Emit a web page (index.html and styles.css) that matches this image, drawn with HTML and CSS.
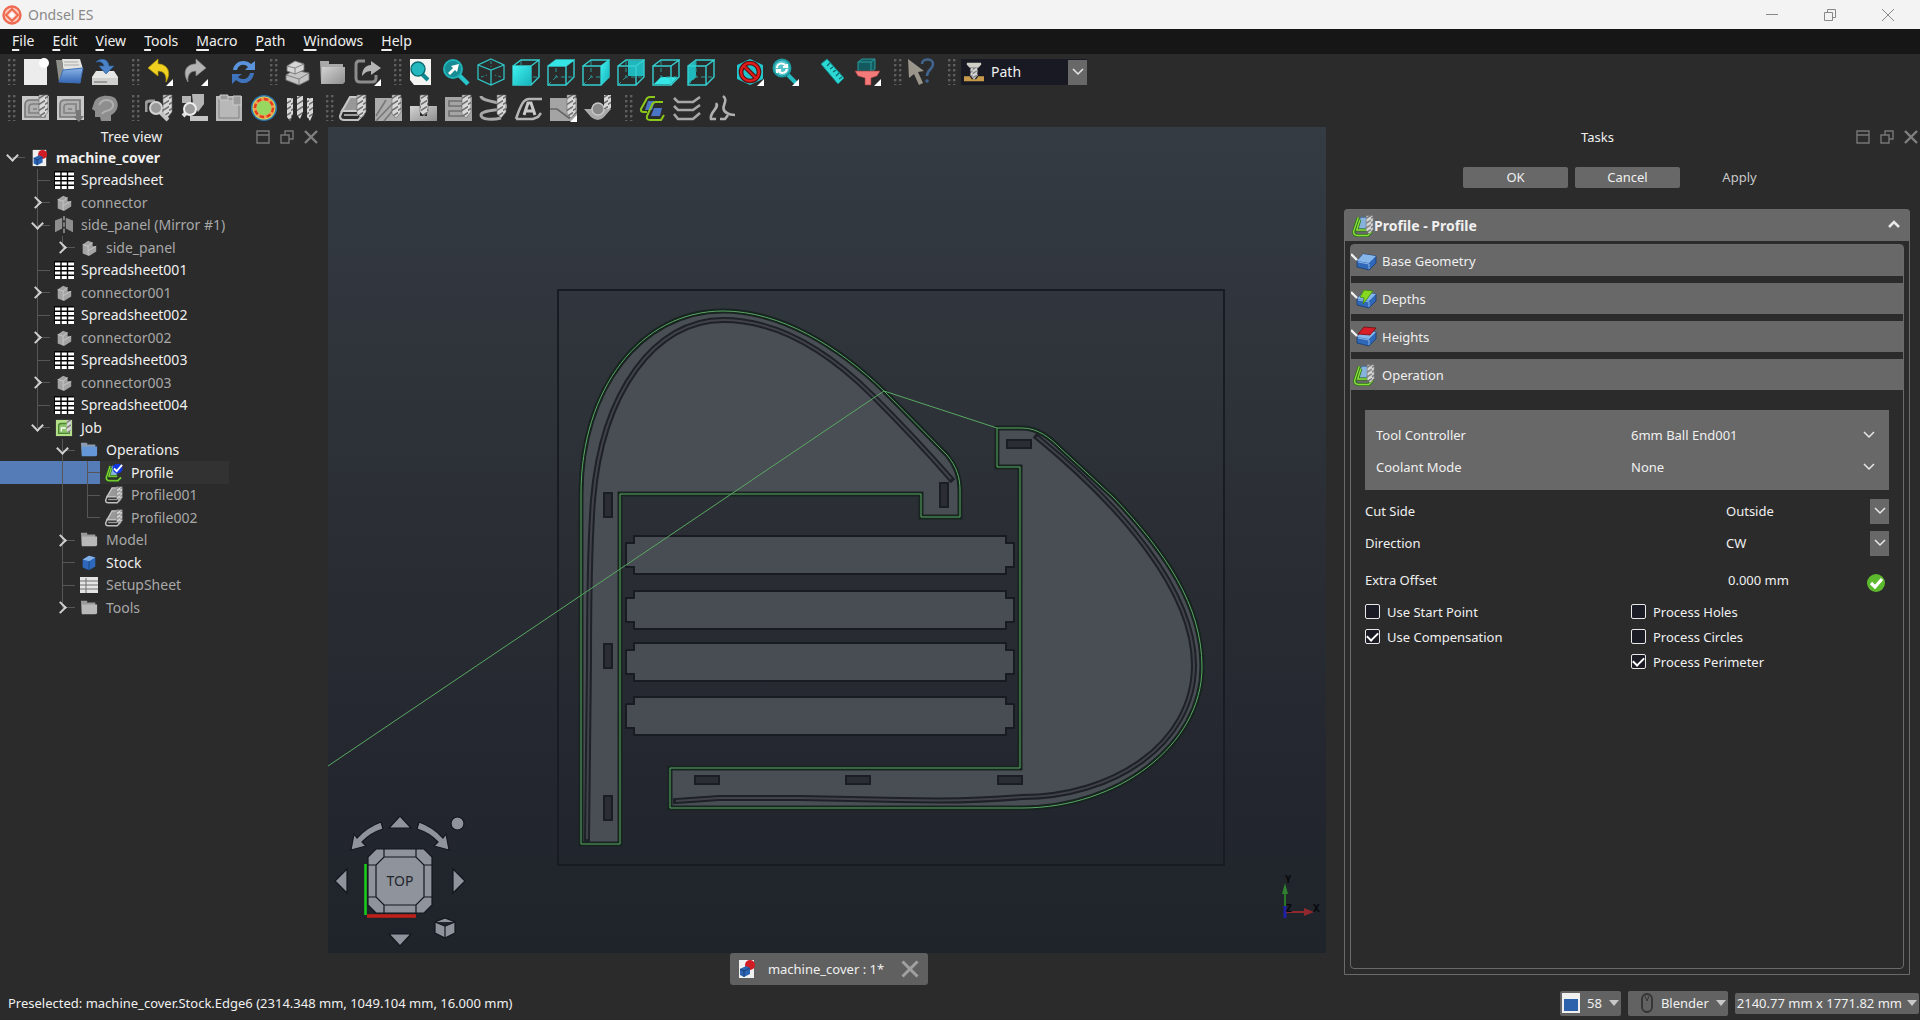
FILE: index.html
```html
<!DOCTYPE html>
<html lang="en">
<head>
<meta charset="utf-8">
<title>Ondsel ES</title>
<link rel="stylesheet" href="styles.css">
</head>
<body>
<svg class="defs" width="0" height="0" aria-hidden="true">
<defs>
<linearGradient id="gGrey" x1="0" y1="0" x2="1" y2="1"><stop offset="0" stop-color="#d4d4d4"/><stop offset="1" stop-color="#8e8e8e"/></linearGradient>
<linearGradient id="gTeal" x1="0" y1="0" x2="1" y2="1"><stop offset="0" stop-color="#3ff0f0"/><stop offset="1" stop-color="#16b4bc"/></linearGradient>
<linearGradient id="gBlue" x1="0" y1="0" x2="0" y2="1"><stop offset="0" stop-color="#8ab4e8"/><stop offset="1" stop-color="#3465b4"/></linearGradient>
<pattern id="pDrill" width="6" height="6" patternUnits="userSpaceOnUse"><rect width="6" height="6" fill="#d8d8d8"/><path d="M-1 5L7 0" stroke="#6d6d6d" stroke-width="1.6"/></pattern>
<path id="pa" d="M581 844V494C581 390 640 311 723 311C780 311 838 346 884 391L947 455C957 467 960 478 960 490V517H921V494H620V844Z"/>
<path id="pb" d="M997 428H1022C1038 428 1050 438 1060 448L1114 498C1165 552 1202 605 1202 667C1202 745 1118 808 1022 808H670V768H1020V467H997Z"/>
<path id="ga" d="M587 839L589 663C589 600 590 540 593 500C602 392 655 320 723 320C778 320 829 352 873 396C905 428 930 455 951 479"/>
<path id="gb" d="M1037 437C1120 505 1194 590 1194 665C1194 745 1112 797 1022 797C980 801 940 801 900 800L800 798H719L676 801"/>
<symbol id="drill" viewBox="0 0 28 28"><path d="M18 1H27V18L22 24L18 20Z" fill="url(#pDrill)" stroke="#6a6a6a" stroke-width=".6"/></symbol>
<symbol id="tri" viewBox="0 0 28 28"><path d="M28 21V28H21Z" fill="#fff"/></symbol>
<symbol id="new" viewBox="0 0 28 28"><path d="M3 1H22L26 5V27H3Z" fill="#ececec"/><circle cx="23" cy="5" r="5" fill="#fff"/></symbol>
<symbol id="open" viewBox="0 0 28 28"><path d="M0 2H6L9 24H3Z" fill="#8f8f8a"/><path d="M6 1H24L27 11L8 16Z" fill="#e4e4e2"/><path d="M8 4H22M8 7H23" stroke="#aaa" stroke-width="1"/><path d="M7 12L27 10L24 25L3 24Z" fill="url(#gBlue)" stroke="#3f6fb5"/></symbol>
<symbol id="save" viewBox="0 0 28 28"><path d="M5 13H23L27 19V27H1V19Z" fill="#e6e6e4"/><path d="M1 20H27V27H1Z" fill="#cfcfcd"/><path d="M3 24H16" stroke="#888" stroke-width="1.5"/><path d="M5 4C9 0 17 0 18 8H23L15 16L8 8H13C12 4 9 3 5 4Z" fill="#4b82c8" stroke="#2f5f9c" stroke-width=".7"/></symbol>
<symbol id="undo" viewBox="0 0 28 28"><path d="M3 10L13 1V6C22 6 27 14 21 24C22 16 18 13 13 13V18Z" fill="#f0d020" stroke="#b89c08" stroke-width=".7"/></symbol>
<symbol id="redo" viewBox="0 0 28 28"><path d="M26 10L16 1V6C6 6 2 14 8 24C7 16 11 13 16 13V18Z" fill="#b4b4b4" stroke="#888" stroke-width=".7"/></symbol>
<symbol id="refresh" viewBox="0 0 28 28"><path d="M4 12C5 3 16 0 22 6L26 3V12H16L19 9C15 5 9 7 8 12Z" fill="#5b94dc"/><path d="M25 15C24 25 13 28 7 22L3 26V16H13L9 19C13 23 20 21 21 15Z" fill="#3f74bd"/></symbol>
<symbol id="bricks" viewBox="0 0 28 28"><g stroke="#777" stroke-width=".9"><path d="M3 17L11 12L26 15V22L16 27L3 22Z" fill="#c4c4c4"/><path d="M3 17L16 21L26 15M16 21V27" fill="none"/><path d="M4 8L12 3L21 6V12L12 16L4 13Z" fill="#d6d6d6"/><path d="M4 8L12 10L21 6M12 10V16" fill="none"/></g></symbol>
<symbol id="folder" viewBox="0 0 28 28"><path d="M2 3H11V6H25V25H3Z" fill="#a9a9a9"/><path d="M4 9H27V24L25 26H3Z" fill="url(#gGrey)"/></symbol>
<symbol id="export" viewBox="0 0 28 28"><path d="M12 3H6Q3 3 3 7V20Q3 24 7 24H19Q23 24 23 20V17" fill="none" stroke="#8c8c8c" stroke-width="3"/><path d="M18 3L28 10L18 17V13C13 13 11 16 9 18C9 12 12 7 18 7Z" fill="#b4b4b4"/></symbol>
<symbol id="fit" viewBox="0 0 28 28"><path d="M3 1H24V27H7L3 22Z" fill="#f4f4f2"/><path d="M14 15L21 22" stroke="#0e8a90" stroke-width="4"/><circle cx="11" cy="11" r="7" fill="#22b8be" stroke="#0c6c72" stroke-width="1.4"/></symbol>
<symbol id="fitsel" viewBox="0 0 28 28"><path d="M16 16L26 26" stroke="#26c6cc" stroke-width="4.5"/><circle cx="11" cy="11" r="9" fill="#178c94" stroke="#1fb4ba" stroke-width="2"/><path d="M6 15L11 10L9 8L17 6L15 14L13 12L8 17Z" fill="#fff"/></symbol>
<symbol id="iso" viewBox="0 0 28 28"><path d="M14 1L27 7V21L14 27L1 21V7ZM1 7L14 12L27 7M14 12V27" fill="none" stroke="#2fc4c6" stroke-width="1.3"/><path d="M14 3V9M4 19L10 17M24 19L18 17" stroke="#2b9092" stroke-width="1" stroke-dasharray="3 2"/></symbol>
<symbol id="wire" viewBox="0 0 28 28"><path d="M1 8H19V27H1ZM1 8L9 2H27L19 8M27 2V19L19 27" fill="none" stroke="#35cfd0" stroke-width="1.4"/><path d="M9 3V19H26M9 19L2 26" fill="none" stroke="#2b9899" stroke-width="1" stroke-dasharray="4 3"/></symbol>
<symbol id="noclip" viewBox="0 0 28 28"><path d="M14 1L27 7V21L14 27L1 21V7Z" fill="#22c4cc"/><circle cx="14" cy="14" r="9" fill="none" stroke="#5c0c0c" stroke-width="4.6"/><path d="M8 8L20 20" stroke="#5c0c0c" stroke-width="4.4"/><circle cx="14" cy="14" r="9" fill="none" stroke="#e01c1c" stroke-width="2.4"/><path d="M8 8L20 20" stroke="#e01c1c" stroke-width="2.2"/></symbol>
<symbol id="zoomr" viewBox="0 0 28 28"><path d="M17 17L26 26" stroke="#22bcc2" stroke-width="4"/><circle cx="11" cy="10" r="8.5" fill="#54c4c8" stroke="#1a9ca2" stroke-width="2"/><path d="M6 10C6 5 12 4 15 8M16 6V9H12M16 11C15 16 9 16 7 12M6 15V12H10" fill="none" stroke="#fff" stroke-width="2"/></symbol>
<symbol id="ruler" viewBox="0 0 28 28"><path d="M3 6L9 1L26 20L20 26Z" fill="#2cd8d4" stroke="#128a8a"/><path d="M12 5L9 8M15 9L12 11M18 12L15 14M21 15L18 18M24 19L21 21" stroke="#0c6466" stroke-width="1.2"/></symbol>
<symbol id="funnel" viewBox="0 0 28 28"><path d="M5 4L9 1H22V11L18 14H5ZM5 4H18V14M18 4L22 1" fill="#125a5e" stroke="#2a9a9c" stroke-width="1"/><path d="M2 13H27L24 18L18 20V27H12V20L5 18Z" fill="#f47a7a" stroke="#a03c3c" stroke-width=".6"/></symbol>
<symbol id="whats" viewBox="0 0 28 28"><path d="M1 1L17 13L11 14L16 25L12 27L7 16L2 20Z" fill="#9b968c"/><path d="M15 6C15 0 26 0 26 6C26 12 20 11 20 18" fill="none" stroke="#42638c" stroke-width="2.6"/><circle cx="20" cy="23" r="1.8" fill="#42638c"/></symbol>
<symbol id="path" viewBox="0 0 28 28"><path d="M0 20H8L11 24H17L20 20H28V27H0Z" fill="#c69a4a"/><path d="M4 1H24V4L20 8H8L4 4Z" fill="#cfcfc8"/><path d="M9 8H19V19L14 25L9 19Z" fill="url(#pDrill)"/></symbol>
<symbol id="job" viewBox="0 0 28 28"><path d="M1 2H28V26H1Z" fill="#c8c8c8"/><path d="M4 23V11Q4 6 9 6H24V23Z" fill="#b0b0b0" stroke="#777" stroke-width="1.6"/><path d="M8 19V13Q8 10 12 10H20V19ZM12 15H16" fill="none" stroke="#808080" stroke-width="1.6"/></symbol>
<symbol id="head" viewBox="0 0 28 28"><path d="M3 9C5 1 18 0 24 4C30 11 25 19 20 21V27H10L9 23H4V17L1 15Z" fill="#8e8e8e"/><path d="M8 11C13 3 23 6 22 12C20 19 13 15 11 20" fill="none" stroke="#b0b0b0" stroke-width="2"/></symbol>
<symbol id="inspect" viewBox="0 0 28 28"><path d="M1 18V10Q1 7 5 7H10" fill="none" stroke="#999" stroke-width="3"/><path d="M15 18L23 26" stroke="#c4c4c4" stroke-width="4"/><circle cx="11" cy="14" r="6" fill="#9a9a9a" stroke="#d4d4d4" stroke-width="2"/></symbol>
<symbol id="sim" viewBox="0 0 28 28"><path d="M2 2H11V9H2ZM12 0H24V10L18 18L13 10Z" fill="#b4b4b4"/><path d="M10 22H28V27H10Z" fill="#c4c4c4"/><path d="M3 22L8 17" stroke="#ddd" stroke-width="4"/><circle cx="10" cy="15" r="6" fill="#9c9c9c" stroke="#eee" stroke-width="2"/></symbol>
<symbol id="panel" viewBox="0 0 28 28"><path d="M1 2H27V27H1Z" fill="#b8b8b8"/><path d="M4 5H24V24H4Z" fill="none" stroke="#808080"/><path d="M5 1H13V6H5ZM18 2H26V11H18Z" fill="#9c9c9c" stroke="#ccc"/></symbol>
<symbol id="bit" viewBox="0 0 28 28"><circle cx="14" cy="14" r="13" fill="#2c78b4"/><circle cx="14" cy="14" r="11.5" fill="#c8dc60"/><circle cx="14" cy="14" r="8" fill="#98d860"/><circle cx="14" cy="14" r="9" fill="none" stroke="#f0a050" stroke-width="3.4"/><circle cx="14" cy="14" r="9" fill="none" stroke="#e03c20" stroke-width="2.4" stroke-dasharray="4.4 2.6"/></symbol>
<symbol id="bits" viewBox="0 0 28 28"><path d="M2 4H8V20L5 27L2 23ZM12 2H18V18L15 25L12 21ZM22 4H28V20L25 27L22 23Z" fill="url(#pDrill)"/></symbol>
<symbol id="profile" viewBox="0 0 28 28"><path d="M11 3H21L19 17H3Z" fill="#989898" stroke="#c8c8c8" stroke-width="2"/><path d="M4 15L1 22Q1 26 5 26H19L25 20" fill="none" stroke="#c0c0c0" stroke-width="2.2"/><path d="M5 21H19" stroke="#a0a0a0" stroke-width="2"/></symbol>
<symbol id="profilec" viewBox="0 0 28 28"><path d="M11 3H20L18 18H5Z" fill="#86b2dc" stroke="#3c6ca0" stroke-width="1"/><path d="M8 3L2 21Q2 26 7 26H20L25 21M10 6L6 19H19" fill="none" stroke="#2c7018" stroke-width="3.8"/><path d="M8 3L2 21Q2 26 7 26H20L25 21M10 6L6 19H19" fill="none" stroke="#8ade3c" stroke-width="1.8"/></symbol>
<symbol id="pocket" viewBox="0 0 28 28"><path d="M1 4H28V27H1Z" fill="#acacac"/><path d="M2 22L12 6M2 27L20 8M10 27L25 9" stroke="#777" stroke-width="1.6"/></symbol>
<symbol id="drilling" viewBox="0 0 28 28"><path d="M1 12H11V22H18V12H28V27H1Z" fill="url(#gGrey)"/><path d="M11 1H19V18L15 22L11 18Z" fill="url(#pDrill)" stroke="#666" stroke-width=".6"/></symbol>
<symbol id="face" viewBox="0 0 28 28"><path d="M1 3H28V27H1Z" fill="#a4a4a4"/><path d="M20 7H5V12H22M22 17H5V22H24" fill="none" stroke="#707070" stroke-width="1.6"/></symbol>
<symbol id="helix" viewBox="0 0 28 28"><path d="M2 2C2 8 26 8 27 12C28 17 2 15 2 21C2 26 14 26 22 24" fill="none" stroke="#a8a8a8" stroke-width="3"/></symbol>
<symbol id="engrave" viewBox="0 0 28 28"><path d="M28 5H15C10 5 7 10 2 25M2 25H19L24 23L27 19" fill="none" stroke="#b4b4b4" stroke-width="2.6"/><path d="M10 21L14 9H17L21 21M12 17H20" fill="none" stroke="#c8c8c8" stroke-width="3"/></symbol>
<symbol id="deburr" viewBox="0 0 28 28"><path d="M1 4H28V27H1Z" fill="#a4a4a4"/><path d="M1 15H8L20 24L28 18" fill="none" stroke="#666" stroke-width="1.6"/></symbol>
<symbol id="surf" viewBox="0 0 28 28"><path d="M0 15H7Q8 11 14 11Q20 11 21 15H27L20 23Q14 29 7 23Z" fill="#aaa"/><circle cx="14" cy="15" r="6" fill="#888" stroke="#c8c8c8" stroke-width="1.4"/><path d="M20 1H27V15H20Z" fill="url(#pDrill)"/></symbol>
<symbol id="dress" viewBox="0 0 28 28"><path d="M10 7H17L14 16H7ZM16 14H24L22 22H13Z" fill="#4a74c4"/><path d="M17 3H12Q9 3 8 6L3 15Q2 18 6 18H9M25 8H18Q15 8 14 11L9 22Q8 26 12 26H23L26 21" fill="none" stroke="#8cc81c" stroke-width="2"/></symbol>
<symbol id="layers" viewBox="0 0 28 28"><path d="M1 4L5 8H20L27 3M1 12L5 16H20L27 11M1 20L5 25H20L27 19" fill="none" stroke="#a8a8a8" stroke-width="2.6"/></symbol>
<symbol id="ramp" viewBox="0 0 28 28"><path d="M15 2C22 7 10 14 19 19Q22 21 27 21M8 9C12 14 1 18 3 25H8M12 25H17L20 21" fill="none" stroke="#b0b0b0" stroke-width="2.6"/></symbol>
<symbol id="sheet" viewBox="0 0 20 18"><path d="M0 0H20V18H0Z" fill="#050505"/><path d="M1 3H20M1 7.500H20M1 12H20M1 16.500H20" stroke="#fff" stroke-width="2.8"/><path d="M7 0V18M13.500 0V18" stroke="#050505" stroke-width="1.400"/></symbol>
<symbol id="sheet2" viewBox="0 0 20 18"><path d="M1 1H19V17H1Z" fill="#e4e4e4"/><path d="M1 5H19M1 9H19M1 13H19M7 2V17" stroke="#707070" stroke-width="1"/></symbol>
<symbol id="body" viewBox="0 0 20 20"><path d="M3 6L9 2L14 4V8L18 8V14L10 19L3 16Z" fill="#a4a4a4"/><path d="M3 6L9 8V18M9 8L14 4M9 13L18 8" stroke="#c8c8c8" fill="none"/></symbol>
<symbol id="mirror" viewBox="0 0 20 20"><path d="M0 5L8 2V14L0 18ZM20 5L12 2V14L20 18Z" fill="#8e8e8e"/><path d="M10 0V19" stroke="#b0b0b0" stroke-width="1.4" stroke-dasharray="5 2"/></symbol>
<symbol id="doc" viewBox="0 0 20 20"><path d="M3 1H18V19H3Z" fill="#f0f0f0"/><circle cx="14" cy="6" r="5" fill="#d01c24"/><path d="M4 10L10 7L14 9V15L8 18L4 16Z" fill="#2c64b4"/><path d="M4 10L8 12L14 9M8 12V18" stroke="#183c70" fill="none"/></symbol>
<symbol id="jobc" viewBox="0 0 20 20"><path d="M1 1H19V19H1Z" fill="#b4e08c"/><path d="M4 16V8Q4 5 7 5H16V16Z" fill="#8cc46c" stroke="#4c8430" stroke-width="1.400"/><path d="M7 14V10H12" fill="none" stroke="#fff" stroke-width="1.400"/><path d="M13 1H18V12L15 16L13 13Z" fill="url(#pDrill)"/></symbol>
<symbol id="folderb" viewBox="0 0 20 20"><path d="M1 2H8V4H17V16H2Z" fill="#8c9cb0"/><path d="M2 6H19V16L17 17H2Z" fill="#6496d8"/></symbol>
<symbol id="foldert" viewBox="0 0 20 20"><path d="M1 2H8V4H17V16H2Z" fill="#9a9a9a"/><path d="M2 6H19V16L17 17H2Z" fill="#b8b8b8"/></symbol>
<symbol id="box" viewBox="0 0 20 20"><path d="M3 6L10 2L17 4V14L10 18L3 15Z" fill="#2d68bc"/><path d="M3 6L10 2L17 4L10 8Z" fill="#84b0e8"/><path d="M10 8V18" stroke="#1a437c"/></symbol>
<symbol id="base" viewBox="0 0 26 22"><path d="M6 11L12 4L25 6V13L18 20L6 17Z" fill="#2f68b8" stroke="#163c70" stroke-width=".8"/><path d="M6 11L12 4L25 6L18 13Z" fill="#86b6ea"/><path d="M7 12L18 14V19" fill="none" stroke="#8ab4e4" stroke-width="1"/><path d="M0 4L4 8L6 10" stroke="#f0f0f0" stroke-width="2.400" fill="none"/></symbol>
<symbol id="depths" viewBox="0 0 26 22"><use href="#base"/><path d="M13 2L22 3L16 11L12 16L13 10L9 9Z" fill="#86d820" stroke="#3c8410" stroke-width=".8"/></symbol>
<symbol id="heights" viewBox="0 0 26 22"><use href="#base"/><path d="M7 8L13 1L25 2L19 9Z" fill="#d81c28" stroke="#6c0c10" stroke-width=".8"/></symbol>
<symbol id="chev" viewBox="0 0 14 14"><path d="M2 4L7 9L12 4" fill="none" stroke="#e8e8e8" stroke-width="1.5"/></symbol>
<symbol id="dock" viewBox="0 0 16 16"><path d="M2 2H14V14H2ZM2 6H14" fill="none" stroke="#777" stroke-width="1.4"/></symbol>
<symbol id="float" viewBox="0 0 16 16"><path d="M6 6V2H14V10H10M2 6H10V14H2Z" fill="none" stroke="#777" stroke-width="1.4"/></symbol>
<symbol id="x" viewBox="0 0 16 16"><path d="M2 2L14 14M14 2L2 14" fill="none" stroke="currentColor" stroke-width="2.4"/></symbol>
</defs>
</svg>

<header class="titlebar">
  <svg class="logo" width="20" height="20" viewBox="0 0 20 20"><circle cx="10" cy="10" r="8.500" fill="#fbd0c4" stroke="#ee6a50" stroke-width="2.400"/><path d="M10 4L16 10L10 16L4 10Z" fill="none" stroke="#ee6a50" stroke-width="2"/><circle cx="10" cy="10" r="2.500" fill="#fff"/></svg>
  <span>Ondsel ES</span>
  <div class="winbtns">
    <button aria-label="Minimize"><svg width="12" height="12" viewBox="0 0 12 12"><path d="M0 5.500H12" stroke="#888"/></svg></button>
    <button aria-label="Restore"><svg width="12" height="12" viewBox="0 0 12 12"><path d="M.5 3.500H8.500V11.500H.5ZM3.500 3V.5H11.500V8.500H9" fill="none" stroke="#888"/></svg></button>
    <button aria-label="Close"><svg width="12" height="12" viewBox="0 0 12 12"><path d="M0 0L12 12M12 0L0 12" stroke="#888"/></svg></button>
  </div>
</header>

<nav class="menubar">
  <button><u>F</u>ile</button><button><u>E</u>dit</button><button><u>V</u>iew</button><button><u>T</u>ools</button><button><u>M</u>acro</button><button><u>P</u>ath</button><button><u>W</u>indows</button><button><u>H</u>elp</button>
</nav>

<section class="toolbars">
  <div class="toolbar">
    <i class="handle"></i>
    <div class="group">
      <button aria-label="New"><svg><use href="#new"/></svg></button>
      <button aria-label="Open"><svg><use href="#open"/></svg></button>
      <button aria-label="Save"><svg><use href="#save"/></svg></button>
    </div>
    <i class="handle"></i>
    <div class="group">
      <button aria-label="Undo"><svg><use href="#undo"/><use href="#tri"/></svg></button>
      <button aria-label="Redo"><svg><use href="#redo"/><use href="#tri"/></svg></button>
      <i class="sep"></i>
      <button aria-label="Refresh"><svg><use href="#refresh"/></svg></button>
    </div>
    <i class="handle"></i>
    <div class="group">
      <button aria-label="Create part"><svg><use href="#bricks"/></svg></button>
      <button aria-label="Create group"><svg><use href="#folder"/></svg></button>
      <button aria-label="Create link"><svg><use href="#export"/><use href="#tri"/></svg></button>
    </div>
    <i class="handle"></i>
    <div class="group">
      <button aria-label="Fit all"><svg><use href="#fit"/></svg></button>
      <button aria-label="Fit selection"><svg><use href="#fitsel"/></svg></button>
      <button aria-label="Isometric"><svg><use href="#iso"/></svg></button>
      <button aria-label="Front"><svg viewBox="0 0 28 28"><use href="#wire"/><path d="M1 8H19V27H1Z" fill="url(#gTeal)"/></svg></button>
      <button aria-label="Top"><svg viewBox="0 0 28 28"><use href="#wire"/><path d="M1 8L9 2H27L19 8Z" fill="#34e6e6"/></svg></button>
      <button aria-label="Right"><svg viewBox="0 0 28 28"><use href="#wire"/><path d="M19 8L27 2V19L19 27Z" fill="url(#gTeal)"/></svg></button>
      <button aria-label="Rear"><svg viewBox="0 0 28 28"><path d="M11 3H27V18H11Z" fill="#1fb8bc"/><use href="#wire"/></svg></button>
      <button aria-label="Bottom"><svg viewBox="0 0 28 28"><path d="M2 26L9 19H26L19 26Z" fill="#34e6e6"/><use href="#wire"/></svg></button>
      <button aria-label="Left"><svg viewBox="0 0 28 28"><path d="M1 8L9 3V19L1 26Z" fill="#1fb8bc"/><use href="#wire"/></svg></button>
      <i class="sep"></i>
      <button aria-label="Draw style"><svg><use href="#noclip"/><use href="#tri"/></svg></button>
      <button aria-label="Sync view"><svg><use href="#zoomr"/><use href="#tri"/></svg></button>
      <i class="sep sep-tight"></i>
      <button aria-label="Measure"><svg><use href="#ruler"/></svg></button>
      <button aria-label="Selection filter"><svg><use href="#funnel"/><use href="#tri"/></svg></button>
    </div>
    <i class="handle"></i>
    <div class="group"><button aria-label="What's this"><svg><use href="#whats"/></svg></button></div>
    <i class="handle"></i>
    <div class="combo workbench">
      <svg class="wbicon"><use href="#path"/></svg>
      <select aria-label="Workbench"><option>Path</option></select>
      <span class="drop"><svg width="14" height="14"><use href="#chev"/></svg></span>
    </div>
  </div>
  <div class="toolbar">
    <i class="handle"></i>
    <div class="group">
      <button aria-label="Job"><svg><use href="#job"/><use href="#drill"/></svg></button>
      <button aria-label="Post process"><svg viewBox="0 0 28 28"><use href="#job"/><path d="M20 16H25V22H28L23 28L17 22H20Z" fill="#777"/></svg></button>
      <button aria-label="Sanity check"><svg><use href="#head"/></svg></button>
    </div>
    <i class="handle"></i>
    <div class="group">
      <button aria-label="Inspect"><svg><use href="#drill"/><use href="#inspect"/></svg></button>
      <button aria-label="Simulator"><svg><use href="#sim"/></svg></button>
      <button aria-label="Finish loop"><svg><use href="#panel"/></svg></button>
      <button aria-label="Toggle"><svg><use href="#bit"/></svg></button>
      <button aria-label="Tool bits"><svg><use href="#bits"/></svg></button>
    </div>
    <i class="handle"></i>
    <div class="group">
      <button aria-label="Profile"><svg><use href="#profile"/><use href="#drill"/></svg></button>
      <button aria-label="Pocket"><svg><use href="#pocket"/><use href="#drill"/></svg></button>
      <button aria-label="Drilling"><svg><use href="#drilling"/></svg></button>
      <button aria-label="Face"><svg><use href="#face"/><use href="#drill"/></svg></button>
      <button aria-label="Helix"><svg><use href="#helix"/><use href="#drill"/></svg></button>
      <button aria-label="Engrave"><svg><use href="#engrave"/></svg></button>
      <button aria-label="Deburr"><svg><use href="#deburr"/><use href="#drill"/><use href="#tri"/></svg></button>
      <button aria-label="3D surface"><svg><use href="#surf"/></svg></button>
    </div>
    <i class="handle"></i>
    <div class="group">
      <button aria-label="Dressup"><svg><use href="#dress"/></svg></button>
      <button aria-label="Array"><svg><use href="#layers"/></svg></button>
      <button aria-label="Ramp"><svg><use href="#ramp"/></svg></button>
    </div>
  </div>
</section>

<main class="work">
  <aside class="tree-dock">
    <div class="dock-title"><h2>Tree view</h2>
      <div class="dock-btns"><button aria-label="Dock"><svg width="16" height="16"><use href="#dock"/></svg></button><button aria-label="Float"><svg width="16" height="16"><use href="#float"/></svg></button><button aria-label="Close"><svg width="16" height="16"><use href="#x"/></svg></button></div>
    </div>
    <ul class="tree">
      <li class="root"><i class="g h open"></i><svg><use href="#doc"/></svg><span>machine_cover</span></li>
      <li><i></i><i class="g v h"></i><svg><use href="#sheet"/></svg><span>Spreadsheet</span></li>
      <li class="dim"><i></i><i class="g v h shut"></i><svg><use href="#body"/></svg><span>connector</span></li>
      <li class="dim"><i></i><i class="g v h open"></i><svg><use href="#mirror"/></svg><span>side_panel (Mirror #1)</span></li>
      <li class="dim"><i></i><i class="g v"></i><i class="g h half shut"></i><svg><use href="#body"/></svg><span>side_panel</span></li>
      <li><i></i><i class="g v h"></i><svg><use href="#sheet"/></svg><span>Spreadsheet001</span></li>
      <li class="dim"><i></i><i class="g v h shut"></i><svg><use href="#body"/></svg><span>connector001</span></li>
      <li><i></i><i class="g v h"></i><svg><use href="#sheet"/></svg><span>Spreadsheet002</span></li>
      <li class="dim"><i></i><i class="g v h shut"></i><svg><use href="#body"/></svg><span>connector002</span></li>
      <li><i></i><i class="g v h"></i><svg><use href="#sheet"/></svg><span>Spreadsheet003</span></li>
      <li class="dim"><i></i><i class="g v h shut"></i><svg><use href="#body"/></svg><span>connector003</span></li>
      <li><i></i><i class="g v h"></i><svg><use href="#sheet"/></svg><span>Spreadsheet004</span></li>
      <li><i></i><i class="g h half open"></i><svg><use href="#jobc"/></svg><span>Job</span></li>
      <li><i></i><i></i><i class="g v h open"></i><svg><use href="#folderb"/></svg><span>Operations</span></li>
      <li class="sel"><i></i><i></i><i class="g v"></i><i class="g v h"></i><svg viewBox="0 0 20 20"><use href="#profilec"/><circle cx="14" cy="5" r="5.500" fill="#1238e0"/><path d="M10 5L13 8L19 1" stroke="#fff" stroke-width="2" fill="none"/></svg><span>Profile</span></li>
      <li class="dim"><i></i><i></i><i class="g v"></i><i class="g v h"></i><svg><use href="#profile"/><use href="#drill"/></svg><span>Profile001</span></li>
      <li class="dim"><i></i><i></i><i class="g v"></i><i class="g h half"></i><svg><use href="#profile"/><use href="#drill"/></svg><span>Profile002</span></li>
      <li class="dim"><i></i><i></i><i class="g v h shut"></i><svg><use href="#foldert"/></svg><span>Model</span></li>
      <li><i></i><i></i><i class="g v h"></i><svg><use href="#box"/></svg><span>Stock</span></li>
      <li class="dim"><i></i><i></i><i class="g v h"></i><svg><use href="#sheet2"/></svg><span>SetupSheet</span></li>
      <li class="dim"><i></i><i></i><i class="g h half shut"></i><svg><use href="#foldert"/></svg><span>Tools</span></li>
    </ul>
  </aside>

  <section class="center">
    <div class="view">
      <svg class="scene" viewBox="328 127 998 826" preserveAspectRatio="xMidYMid slice">
        <rect x="558" y="290" width="666" height="575" fill="none" stroke="#181c22" stroke-width="2"/>
        <g class="part"><use href="#pa"/><use href="#pb"/></g>
        <g class="groove-edge"><use href="#ga"/><use href="#gb"/></g>
        <g class="groove-floor"><use href="#ga"/><use href="#gb"/></g>
        <g class="slot">
          <rect x="604" y="493" width="8" height="24"/><rect x="604" y="644" width="8" height="24"/><rect x="604" y="796" width="8" height="24"/><rect x="940" y="483" width="8" height="24"/>
          <rect x="695" y="776" width="24" height="8"/><rect x="846" y="776" width="24" height="8"/><rect x="998" y="776" width="24" height="8"/><rect x="1007" y="440" width="24" height="8"/>
        </g>
        <g class="bar">
          <path id="bar" d="M634 536H1006V543H1014V567H1006V574H634V567H626V543H634Z"/>
          <use href="#bar" y="55"/><use href="#bar" y="107"/><use href="#bar" y="161"/>
        </g>
        <g class="toolpath"><use href="#pa"/><use href="#pb"/><path d="M328 766L884 391L997 428"/></g>
      </svg>
      <svg class="navcube" width="140" height="140" viewBox="332 810 140 140">
        <g fill="#8f939b" stroke="#14171c" stroke-width="1.200">
          <path d="M400 816L411 828H389ZM400 946L389 934H411ZM335 881L347 869V893ZM465 881L453 869V893Z"/>
          <circle cx="457.500" cy="823.500" r="6.500"/>
          <path d="M381 822L383 829Q370 833 362 842L366 846L351 850L354 834L357 838Q367 827 381 822Z"/>
          <path d="M419 822L417 829Q430 833 438 842L434 846L449 850L446 834L443 838Q433 827 419 822Z"/>
          <path d="M376 849H424L432 857V905L424 913H376L368 905V857Z"/>
          <path d="M384 857H416L424 865V897L416 905H384L376 897V865ZM384 849V857M416 849V857M384 905V913M416 905V913M368 865H376M368 897H376M424 865H432M424 897H432"/>
          <path d="M445 918L455 922V933L445 938L435 933V922ZM435 922L445 926L455 922M445 926V938"/>
        </g>
        <path d="M365.500 864V915" stroke="#18d018" stroke-width="2.500"/><path d="M367 916H416" stroke="#c02018" stroke-width="3.500"/>
        <text x="400" y="886" text-anchor="middle">TOP</text>
      </svg>
      <svg class="axes" width="44" height="50" viewBox="1278 872 44 50">
        <path d="M1285 911V888" stroke="#287828" stroke-width="2"/><path d="M1285 883L1288 894H1282Z" fill="#308030"/>
        <path d="M1286 912H1304" stroke="#902830" stroke-width="2"/><path d="M1314 912L1304 908V916Z" fill="#902830"/>
        <path d="M1285 906V918" stroke="#2020a8" stroke-width="3"/>
        <text x="1285" y="883">Y</text><text x="1313" y="912">X</text><text x="1286" y="912">Z</text>
      </svg>
    </div>
    <div class="tabs"><div class="tab"><svg width="20" height="20"><use href="#doc"/></svg><span>machine_cover : 1*</span><button aria-label="Close tab"><svg width="20" height="20"><use href="#x"/></svg></button></div></div>
  </section>

  <aside class="tasks">
    <div class="dock-title"><h2>Tasks</h2>
      <div class="dock-btns"><button aria-label="Dock"><svg width="16" height="16"><use href="#dock"/></svg></button><button aria-label="Float"><svg width="16" height="16"><use href="#float"/></svg></button><button aria-label="Close"><svg width="16" height="16"><use href="#x"/></svg></button></div>
    </div>
    <div class="actions"><button>OK</button><button>Cancel</button><button disabled>Apply</button></div>
    <div class="taskbox">
      <button class="taskhead"><svg width="22" height="22"><use href="#profilec"/><use href="#drill"/></svg><span>Profile - Profile</span><svg class="up" width="14" height="14" viewBox="0 0 14 14"><path d="M2 8L7 3L12 8" fill="none" stroke="#e8e8e8" stroke-width="2.500"/></svg></button>
      <div class="sections">
        <button class="sect"><svg width="26" height="22"><use href="#base"/></svg>Base Geometry</button>
        <button class="sect"><svg width="26" height="22"><use href="#depths"/></svg>Depths</button>
        <button class="sect"><svg width="26" height="22"><use href="#heights"/></svg>Heights</button>
        <button class="sect"><svg width="26" height="22"><use href="#profilec"/><use href="#drill"/></svg>Operation</button>
        <form class="op">
          <div class="ctl">
            <label for="tc">Tool Controller</label><div class="combo"><select id="tc"><option>6mm Ball End001</option></select><span class="drop"><svg width="14" height="14"><use href="#chev"/></svg></span></div>
            <label for="cm">Coolant Mode</label><div class="combo"><select id="cm"><option>None</option></select><span class="drop"><svg width="14" height="14"><use href="#chev"/></svg></span></div>
          </div>
          <div class="fields">
            <label for="cs">Cut Side</label><div class="combo"><select id="cs"><option>Outside</option></select><span class="drop"><svg width="14" height="14"><use href="#chev"/></svg></span></div>
            <label for="dr">Direction</label><div class="combo"><select id="dr"><option>CW</option></select><span class="drop"><svg width="14" height="14"><use href="#chev"/></svg></span></div>
          </div>
          <div class="fields offset">
            <label for="eo">Extra Offset</label><div class="combo"><input id="eo" type="text" value="0.000 mm"><svg class="ok" width="20" height="20" viewBox="0 0 20 20"><circle cx="10" cy="10" r="9" fill="#5cb82c"/><path d="M5 10L9 14L16 6" fill="none" stroke="#fff" stroke-width="3.200"/></svg></div>
          </div>
          <div class="checks">
            <div><label><input type="checkbox">Use Start Point</label><label><input type="checkbox" checked>Use Compensation</label></div>
            <div><label><input type="checkbox">Process Holes</label><label><input type="checkbox">Process Circles</label><label><input type="checkbox" checked>Process Perimeter</label></div>
          </div>
        </form>
      </div>
    </div>
  </aside>
</main>

<footer class="status">
  <span class="msg">Preselected: machine_cover.Stock.Edge6 (2314.348 mm, 1049.104 mm, 16.000 mm)</span>
  <button class="notif"><svg width="18" height="20" viewBox="0 0 18 20"><path d="M0 0H18V20H0Z" fill="#f0f0f0"/><path d="M2 6H16V18H2Z" fill="#2c62ac"/></svg>58<i class="caret"></i></button>
  <button class="navstyle"><svg width="14" height="20" viewBox="0 0 14 20"><rect x="2" y="1" width="10" height="18" rx="5" fill="none" stroke="#333" stroke-width="1.800"/><path d="M5 3L7 8L9 3" stroke="#333" fill="none"/></svg>Blender<i class="caret"></i></button>
  <button class="dims">2140.77 mm x 1771.82 mm<i class="caret"></i></button>
</footer>
</body>
</html>
```
FILE: styles.css
```css
* { box-sizing: border-box; }
body {
  margin: 0;
  min-height: 100vh;
  display: flex;
  flex-direction: column;
  background: #2b2b2b;
  color: #f0f0f0;
  font: 14px/20px "Noto Sans", "Open Sans", sans-serif;
}
button, select, input {
  font: inherit;
  color: inherit;
  background: none;
  border: 0;
  padding: 0;
  margin: 0;
}
button svg { display: block; }
.defs { position: absolute; }

.titlebar {
  height: 29px;
  background: #f3f3f3;
  color: #888;
  display: flex;
  align-items: center;
  padding-left: 2px;
  gap: 6px;
}
.winbtns { margin-left: auto; display: flex; padding-right: 3px; }
.winbtns button { width: 58px; display: grid; place-items: center; }

.menubar {
  height: 25px;
  background: #161616;
  display: flex;
  align-items: center;
  gap: 18px;
  padding: 0 12px 2px;
}
.menubar u { text-decoration-thickness: 2px; text-underline-offset: 3px; }

.toolbars {
  display: flex;
  flex-direction: column;
  gap: 8px;
  padding: 4px 0 5px;
}
.toolbar { display: flex; align-items: center; height: 28px; }
.handle {
  width: 8px;
  height: 26px;
  margin: 0 5px 0 13px;
  background: radial-gradient(circle at 1px 1px, #5e5e5e 1px, transparent 2px) 0 0 / 5px 5px;
}
.handle:first-child { margin-left: 8px; }
.group { display: flex; gap: 7px; }
.group svg { width: 28px; height: 28px; }
.sep { width: 7px; }
.sep-tight { width: 5px; }

.combo { display: grid; align-items: center; }
.combo > * { grid-row: 1; grid-column: 1; }
select { appearance: none; width: 100%; }
.drop {
  justify-self: end;
  width: 19px;
  height: 25px;
  display: grid;
  place-items: center;
  pointer-events: none;
}
.workbench { width: 126px; height: 26px; background: #191924; }
.workbench select { padding-left: 30px; }
.workbench .drop { background: #686868; }
.wbicon { width: 20px; height: 20px; margin-left: 3px; }

.work { flex: 1; display: flex; }
.tree-dock { width: 328px; }
.dock-title {
  display: grid;
  grid-template-columns: 1fr auto;
  align-items: center;
  height: 19px;
}
.dock-title h2 { margin: 0; font: inherit; text-align: center; grid-row: 1; grid-column: 1 / 3; }
.dock-btns { grid-row: 1; grid-column: 2; display: flex; gap: 8px; color: #808080; }
.tree-dock .dock-title { padding-right: 9px; }
.tree-dock h2 { padding-right: 56px; }

.tree { list-style: none; margin: 0; padding: 0; }
.tree li { display: flex; height: 22px; line-height: 22px; align-items: center; }
.tree li:nth-child(odd) { height: 23px; }
.tree svg { width: 20px; height: 18px; margin-left: 4px; flex: none; }
.tree li span { padding: 0 7px; }
.tree .root { font-weight: bold; }
.dim { color: #a8a8a8; }
.tree i { width: 25px; height: 100%; position: relative; flex: none; }
.g { --line: linear-gradient(#565656, #565656) no-repeat; }
.g.v { background: var(--line) 12px 0 / 1px 100%; }
.g.h { background: var(--line) 12px 50% / 13px 1px; }
.g.v.h { background: var(--line) 12px 0 / 1px 100%, var(--line) 12px 50% / 13px 1px; }
.g.half { background: var(--line) 12px 0 / 1px 50%, var(--line) 12px 50% / 13px 1px; }
.open::after, .shut::after {
  content: "";
  position: absolute;
  width: 7px;
  height: 7px;
  left: 8px;
  top: 5px;
  border: solid #d0d0d0;
  border-width: 0 2px 2px 0;
  transform: rotate(45deg);
}
.shut::after { left: 6px; top: 7px; transform: rotate(-45deg); }
.sel { background: linear-gradient(90deg, #567cb8 100px, #323232 100px 229px, transparent 229px); }

.center { flex: 1; display: flex; flex-direction: column; }
.view {
  flex: 1;
  position: relative;
  background: linear-gradient(#353b43, #2a2e34 50%, #23262e 80%, #1f242a);
}
.scene { position: absolute; inset: 0; width: 100%; height: 100%; }
.part { fill: #494e55; stroke: #172420; stroke-width: 5; }
.groove-edge { fill: none; stroke: #1e2127; stroke-width: 6; stroke-linecap: square; }
.groove-floor { fill: none; stroke: #40444a; stroke-width: 2; }
.slot { fill: #2a2d33; stroke: #1a1d23; stroke-width: 2; }
.bar { fill: #484c53; stroke: #181b21; stroke-width: 2; }
.toolpath { fill: none; stroke: #58a862; stroke-width: 1; }
.navcube { position: absolute; left: 4px; bottom: 3px; }
.navcube text { font: 14px "Noto Sans", sans-serif; fill: #22252b; }
.axes { position: absolute; right: 4px; bottom: 31px; }
.axes text { font: bold 10px "Noto Sans", sans-serif; fill: #08090c; }

.tabs { height: 32px; display: flex; justify-content: center; padding-left: 4px; font-size: 13px; }
.tab {
  display: flex;
  align-items: center;
  gap: 12px;
  padding: 0 8px 0 6px;
  background: #606060;
  border-radius: 3px;
}
.tab button { margin-left: 4px; color: #a0a0a0; }

.tasks { width: 594px; display: flex; flex-direction: column; padding-bottom: 10px; font-size: 13px; }
.tasks h2 { padding-right: 50px; }
.tasks .dock-title { height: 20px; padding-right: 1px; }
.actions { display: flex; gap: 7px; padding: 20px 0 0 137px; }
.actions button { width: 105px; height: 21px; line-height: 21px; background: #686868; border-radius: 2px; }
.actions button:disabled { background: none; color: #c8c8c8; }
.taskbox {
  flex: 1;
  display: flex;
  flex-direction: column;
  margin: 21px 10px 0 18px;
  border: 1px solid #6a6a6a;
  border-radius: 3px 3px 0 0;
}
.taskhead {
  display: flex;
  align-items: center;
  height: 31px;
  padding: 0 8px 0 7px;
  background: #686868;
  font-size: 14px;
  font-weight: bold;
}
.taskhead .up { margin-left: auto; }
.sections {
  flex: 1;
  display: flex;
  flex-direction: column;
  gap: 7px;
  margin: 3px 5px 5px;
  border: 1px solid #6a6a6a;
  border-radius: 4px;
}
.sect {
  display: flex;
  align-items: center;
  gap: 5px;
  height: 31px;
  background: #686868;
}
.op { padding: 13px 14px; }
.ctl {
  display: grid;
  grid-template-columns: 255px 1fr;
  grid-auto-rows: 32px;
  align-items: center;
  padding: 9px 11px 7px;
  background: #686868;
}
.fields {
  display: grid;
  grid-template-columns: 361px 1fr;
  grid-auto-rows: 32px;
  align-items: center;
  padding-top: 5px;
}
.fields .drop { background: #686868; }
.offset input { width: 120px; padding-left: 2px; }
.ok { justify-self: end; margin: 6px 3px 0 0; }
.checks { display: grid; grid-template-columns: 266px 1fr; padding-top: 3px; }
.checks label { display: flex; align-items: center; gap: 7px; height: 25px; }
.checks input {
  appearance: none;
  width: 15px;
  height: 15px;
  border: 1px solid #e8e8e8;
  border-radius: 2px;
  background: #1b1b26;
  display: grid;
  place-items: center;
}
.checks input:checked::after {
  content: "";
  width: 5px;
  height: 9px;
  margin-bottom: 2px;
  border: solid #fff;
  border-width: 0 2px 2px 0;
  transform: rotate(45deg);
}

.status { height: 35px; display: flex; align-items: center; gap: 7px; padding: 1px 1px 0 8px; font-size: 13px; }
.msg { margin-right: auto; }
.status button {
  display: flex;
  align-items: center;
  gap: 7px;
  height: 25px;
  background: #626262;
  border-radius: 2px;
  padding: 0 2px;
  white-space: nowrap;
}
.status .navstyle { padding-left: 12px; }
.status .dims { height: 21px; gap: 5px; }
.caret { border: 5px solid transparent; border-top: 6px solid #c8c8c8; border-bottom: 0; }
```
